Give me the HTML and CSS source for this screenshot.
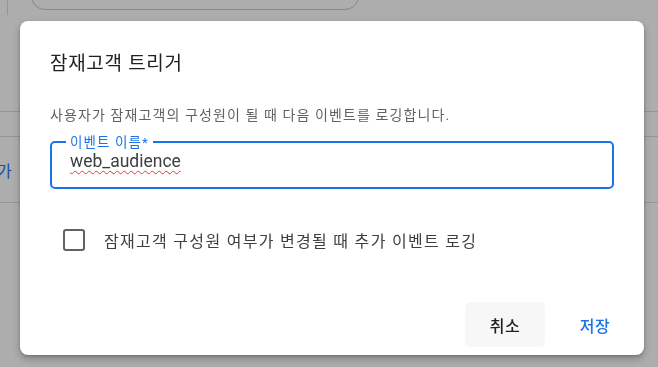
FILE: index.html
```html
<!DOCTYPE html>
<html lang="ko">

    <head>
        <meta charset="UTF-8">
        <title>잠재고객 트리거</title>
        <link rel="stylesheet" href="styles.css">
    </head>

    <body>
        <!-- page behind the dialog -->
        <div class="page">
            <div class="top-row">
                <div class="rail"></div>
                <div class="search-box"></div>
            </div>
            <div class="list-row first"></div>
            <div class="list-row second"></div>
            <div class="list-row third">
                <span class="cut-text">가</span>
            </div>
        </div>

        <div class="scrim"></div>

        <section class="dialog">
            <h2 class="dialog-title">잠재고객 트리거</h2>

            <div class="dialog-body">
                <p class="description">사용자가 잠재고객의 구성원이 될 때 다음 이벤트를 로깅합니다.</p>

                <div class="field">
                    <span class="field-label">이벤트 이름*</span>
                    <span class="field-value"><span class="misspelled">web_audience</span></span>
                </div>

                <label class="check-row">
                    <span class="checkbox"></span>
                    <span class="check-text">잠재고객 구성원 여부가 변경될 때 추가 이벤트 로깅</span>
                </label>
            </div>

            <div class="dialog-actions">
                <button class="btn btn-cancel">취소</button>
                <button class="btn btn-save">저장</button>
            </div>
        </section>
    </body>

</html>
```

FILE: styles.css
```css
* {
    padding: 0;
    margin: 0;
    box-sizing: border-box;
}

body {
    width: 658px;
    height: 367px;
    overflow: hidden;
    background-color: #fff;
    font-family: Roboto, "Noto Sans CJK KR", sans-serif;
}

/* background page */
.page {
    height: 100%;
}

.top-row {
    display: flex;
    height: 15px;
}

.rail {
    width: 8px;
    border-right: 1px solid #dadce0;
}

.search-box {
    margin-left: 23px;
    margin-top: -20px;
    width: 328px;
    height: 30px;
    border: 1px solid #c4c7c5;
    border-radius: 14px;
}

.list-row {
    border-bottom: 1px solid #dadce0;
}

.list-row.first {
    height: 97px;
}

.list-row.second {
    height: 25px;
}

.list-row.third {
    height: 66px;
    display: flex;
    align-items: center;
}

.cut-text {
    margin-left: -3px;
    font-size: 16px;
    color: #1a73e8;
}

.scrim {
    position: fixed;
    inset: 0;
    background-color: rgba(0, 0, 0, 0.32);
}

/* dialog */
.dialog {
    position: fixed;
    left: 20px;
    top: 21px;
    width: 624px;
    height: 334px;
    display: flex;
    flex-direction: column;
    background-color: #fff;
    border-radius: 8px;
    box-shadow: 0 4px 8px rgba(0, 0, 0, 0.25), 0 1px 3px rgba(0, 0, 0, 0.2);
}

.dialog-title {
    padding: 31px 30px 0;
    font-size: 19px;
    font-weight: 400;
    line-height: 24px;
    letter-spacing: 0.7px;
    color: #202124;
}

.dialog-body {
    padding: 0 30px;
}

.description {
    margin-top: 29px;
    font-size: 14px;
    line-height: 20px;
    letter-spacing: 1.1px;
    color: #5f6368;
}

.field {
    position: relative;
    margin-top: 16px;
    height: 48px;
    padding: 5px 18px 0;
    border: 2px solid #1a73e8;
    border-radius: 5px;
}

.field-label {
    position: absolute;
    left: 14px;
    top: -9px;
    padding: 0 4px;
    background-color: #fff;
    font-size: 13.5px;
    line-height: 16px;
    letter-spacing: 1.1px;
    color: #1a73e8;
}

.field-value {
    display: block;
    font-size: 17.5px;
    line-height: 26px;
    color: #3c4043;
}

.misspelled {
    text-decoration: underline wavy #e53935;
    text-decoration-thickness: 1px;
    text-decoration-skip-ink: none;
    text-underline-offset: 3px;
}

.check-row {
    display: flex;
    align-items: center;
    margin-top: 40px;
    height: 22px;
}

.checkbox {
    margin-left: 13px;
    width: 22px;
    height: 22px;
    border: 2px solid #5f6368;
    border-radius: 3px;
}

.check-text {
    margin-left: 19px;
    font-size: 16px;
    letter-spacing: 1.3px;
    color: #3c4043;
}

.dialog-actions {
    margin-top: auto;
    display: flex;
    justify-content: flex-end;
    gap: 10px;
    padding: 0 9px 8px;
}

.btn {
    width: 80px;
    height: 45px;
    border: none;
    border-radius: 5px;
    background: none;
    font-family: inherit;
    font-size: 16px;
    font-weight: 500;
    letter-spacing: 0.5px;
}

.btn-cancel {
    background-color: #f7f7f7;
    color: #202124;
}

.btn-save {
    color: #1a73e8;
}
```
